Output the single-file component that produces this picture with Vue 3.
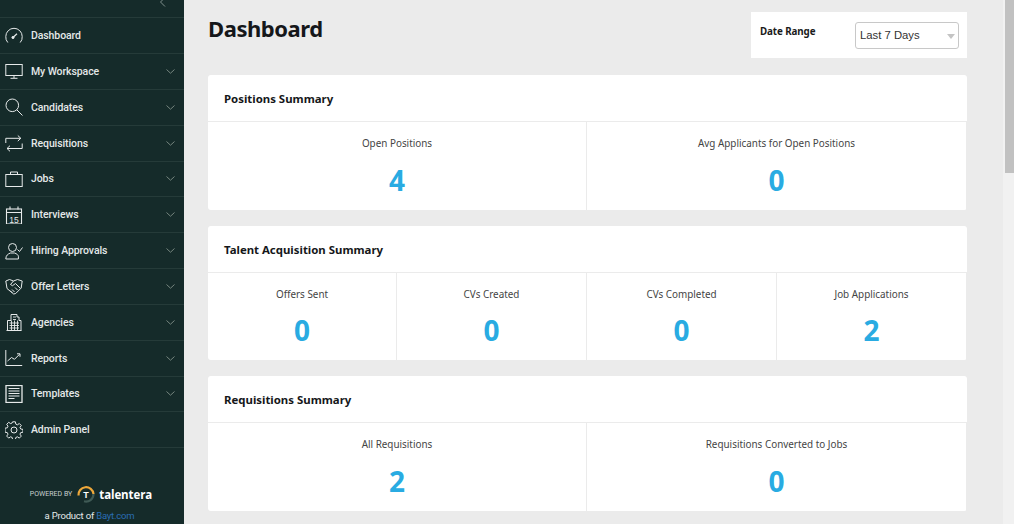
<script setup>
const navItems = [
  { label: 'Dashboard', icon: 'gauge', arrow: false },
  { label: 'My Workspace', icon: 'monitor', arrow: true },
  { label: 'Candidates', icon: 'search', arrow: true },
  { label: 'Requisitions', icon: 'repeat', arrow: true },
  { label: 'Jobs', icon: 'case', arrow: true },
  { label: 'Interviews', icon: 'calendar', arrow: true },
  { label: 'Hiring Approvals', icon: 'approve', arrow: true },
  { label: 'Offer Letters', icon: 'hands', arrow: true },
  { label: 'Agencies', icon: 'building', arrow: true },
  { label: 'Reports', icon: 'chart', arrow: true },
  { label: 'Templates', icon: 'doc', arrow: true },
  { label: 'Admin Panel', icon: 'gear', arrow: false }
]
const cards = [
  { title: 'Positions Summary', stats: [['Open Positions', 4], ['Avg Applicants for Open Positions', 0]] },
  { title: 'Talent Acquisition Summary', stats: [['Offers Sent', 0], ['CVs Created', 0], ['CVs Completed', 0], ['Job Applications', 2]] },
  { title: 'Requisitions Summary', stats: [['All Requisitions', 2], ['Requisitions Converted to Jobs', 0]] }
]
</script>

<template>
  <div class="page">
    <aside class="sidebar">
      <div class="collapse">
        <svg width="8" height="12" viewBox="0 0 8 12"><path d="M6 0.5 1.500 5 6 9.500" fill="none" stroke="#7f8f8c" stroke-width="1"/></svg>
      </div>
      <nav>
        <a v-for="item in navItems" :key="item.label" class="nav-item">
          <svg class="nav-icon" width="18" height="18" viewBox="0 0 18 18" fill="none" stroke="#e6eaea" stroke-width="1">
            <template v-if="item.icon === 'gauge'">
              <path d="M2.800 15.500A8 8 0 0 1 .8 9.500 8.200 8.200 0 0 1 17.200 9.500 8 8 0 0 1 15.200 15.500"/><path d="M8.200 10.200 12 6.800" stroke-width="1.200"/><circle cx="8" cy="10.500" r="1.100" fill="#e6eaea"/>
            </template>
            <template v-else-if="item.icon === 'monitor'">
              <rect x=".8" y="2.500" width="16.400" height="11"/><path d="M9 13.500v2.500M5.500 16.300h7"/>
            </template>
            <template v-else-if="item.icon === 'search'">
              <circle cx="7.300" cy="7.300" r="6.300"/><path d="M11.800 11.800l5.700 5.700"/>
            </template>
            <template v-else-if="item.icon === 'repeat'">
              <path d="M.8 9V4.300h15M12.800 1.500l3 2.800-3 2.800M17.200 9.500v5H2M5 11.700l-3 2.800 3 2.800"/>
            </template>
            <template v-else-if="item.icon === 'case'">
              <rect x=".8" y="4.500" width="16.400" height="12"/><path d="M5.500 4.500V2h7v2.500"/>
            </template>
            <template v-else-if="item.icon === 'calendar'">
              <rect x="1.500" y="3" width="15" height="15" stroke-width="1.100"/><path d="M1.500 6.500h15M5 .5v3M13 .5v3" stroke-width="1.100"/><text x="9" y="16.500" text-anchor="middle" class="cal-text">15</text>
            </template>
            <template v-else-if="item.icon === 'approve'">
              <circle cx="7.500" cy="5.500" r="4"/><path d="M.8 17c0-3.500 2.200-5.200 4.700-6h4c2.400.8 3.700 2 3.900 3.300V17zM12.500 7.500l2 2 3-4"/>
            </template>
            <template v-else-if="item.icon === 'hands'">
              <path d="M.8 4 4.500 2.500 8.500 4l4-1.500L17.200 4l-1 7-5.500 5.500-2 .5-3.500-2.800L2 11.500z"/><path d="M8.500 4 5.500 7.500l2 1.200 3-2.200 4.500 4.500M7 12.500l2.500 2.500M5 13.500l2.200 2.200M10 10.500l2.500 2.500"/>
            </template>
            <template v-else-if="item.icon === 'building'">
              <path d="M2.500 17.500V7.500h3.500V1.500h6V4h2v3.500h2V17.500zM1.500 17.500h15"/><path d="M4.500 10h9.500M4.500 12.500h9.500M4.500 15h9.500M8 4h3M8 6.500h3M6.500 7.500v10M9.500 7.500v10M12.500 7.500v10" stroke-width=".9"/>
            </template>
            <template v-else-if="item.icon === 'chart'">
              <path d="M.8 1v15.500h16.400"/><path d="M2.500 12l4-3.500 3 1.800 5-5M12 4.800h3v3"/>
            </template>
            <template v-else-if="item.icon === 'doc'">
              <rect x="1" y=".5" width="16" height="17" stroke-width="1.300"/><path d="M3.500 3.500h11M3.500 6h11M3.500 8.500h11M3.500 11h11M3.500 13.500h6"/>
            </template>
            <template v-else>
              <circle cx="9" cy="9" r="3"/><path d="M7.600.8h2.800l.4 2.300 1.600.7 1.900-1.300 2 2-1.300 1.900.7 1.600 2.300.4v2.800l-2.300.4-.7 1.600 1.300 1.900-2 2-1.900-1.300-1.600.7-.4 2.300H7.600l-.4-2.300-1.600-.7-1.900 1.300-2-2 1.300-1.900-.7-1.600-2.300-.4V7.200l2.300-.4.7-1.600-1.300-1.900 2-2 1.900 1.300 1.600-.7z"/>
            </template>
          </svg>
          <span class="nav-label">{{ item.label }}</span>
          <svg v-if="item.arrow" class="nav-arrow" width="9" height="5" viewBox="0 0 9 5"><path d="M.5.5 4.500 4.200 8.500.5" fill="none" stroke="#75857f" stroke-width="1"/></svg>
        </a>
      </nav>
      <footer class="side-footer">
        <div class="powered">
          <span class="powered-by">POWERED BY</span>
          <svg class="logo" width="18" height="18" viewBox="0 0 18 18" fill="none">
            <path d="M1.500 10.500A7.500 7.500 0 0 1 16.500 9" stroke="#eea83a" stroke-width="2.200"/>
            <path d="M16.500 9A7.500 7.500 0 0 1 7 16.300" stroke="#3f5a55" stroke-width="2.200"/>
            <text x="9" y="12.500" text-anchor="middle" class="logo-t">T</text>
          </svg>
          <span class="brand">talentera</span>
        </div>
        <div class="product">a Product of <span class="bayt">Bayt.com</span></div>
      </footer>
    </aside>
    <main class="main">
      <header class="top">
        <h1>Dashboard</h1>
        <div class="range">
          <label>Date Range</label>
          <div class="select">
            <span>Last 7 Days</span>
            <i class="caret"></i>
          </div>
        </div>
      </header>
      <section v-for="card in cards" :key="card.title" class="card">
        <h2>{{ card.title }}</h2>
        <div class="stats">
          <div v-for="s in card.stats" :key="s[0]" class="stat">
            <div class="stat-label">{{ s[0] }}</div>
            <div class="stat-value">{{ s[1] }}</div>
          </div>
        </div>
      </section>
    </main>
    <div class="scrollbar"><div class="thumb"></div></div>
  </div>
</template>

<style>
html, body { margin: 0; overflow: hidden; height: 524px; background: #ebebeb; }
</style>

<style scoped>
.page { display: flex; width: 1014px; height: 524px; overflow: hidden; background: #ebebeb; }
.sidebar { width: 184px; flex: none; background: #152b2a; display: flex; flex-direction: column; font-family: Roboto, sans-serif; }
.collapse { height: 18.250px; flex: none; overflow: hidden; box-sizing: border-box; padding-left: 159px; border-bottom: 1px solid #253b39; }
.collapse svg { display: block; margin-top: -3px; }
.nav-item { height: 35.830px; box-sizing: border-box; display: flex; align-items: center; padding: 0 9px 0 5px; border-bottom: 1px solid #253b39; color: #e4e8e8; }
.nav-icon { flex: none; margin-right: 8px; }
.nav-label { flex: 1; font-size: 10.500px; font-weight: 500; letter-spacing: -.1px; }
.nav-arrow { flex: none; }
.cal-text { font: 8.500px "Liberation Sans", sans-serif; fill: #e6eaea; stroke: none; }
.side-footer { margin-top: auto; padding-bottom: 2px; text-align: center; color: #e6eaea; }
.powered { display: flex; align-items: center; justify-content: center; height: 20px; padding-right: 2px; }
.powered-by { font-size: 7px; color: #c8d0cf; margin-right: 5px; }
.logo { margin-right: 4px; }
.logo-t { font: bold 9px "Liberation Sans", sans-serif; fill: #fff; }
.brand { font: bold 11.500px "Open Sans", sans-serif; color: #fff; letter-spacing: -.1px; }
.product { font-size: 9.500px; letter-spacing: -.2px; margin-top: 6px; line-height: 12px; padding-right: 5px; }
.bayt { color: #2a6db5; }
.main { width: 759px; flex: none; margin-left: 24px; font-family: "Noto Sans", sans-serif; }
.top { display: flex; justify-content: space-between; align-items: flex-start; height: 75px; }
h1 { margin: 12px 0 0; font-size: 22px; letter-spacing: -.45px; line-height: 32px; font-weight: 700; color: #15171a; }
.range { margin-top: 12px; width: 216px; height: 46px; box-sizing: border-box; background: #fff; display: flex; justify-content: space-between; padding: 10px 8px 0 9px; }
.range label { font-size: 9.800px; letter-spacing: -.1px; font-weight: 700; color: #1a1a1a; line-height: 20px; }
.select { width: 104px; height: 27px; box-sizing: border-box; border: 1px solid #c8c8c8; border-radius: 3px; display: flex; align-items: center; justify-content: space-between; padding: 0 3px 2px 4px; font: 11.300px "Liberation Sans", sans-serif; color: #333; }
.caret { width: 0; height: 0; border: 4px solid transparent; border-top: 5px solid #c4c4c4; border-bottom: 0; margin-top: 4px; }
.card { background: #fff; border-radius: 3px; margin-bottom: 16px; height: 134.670px; display: flex; flex-direction: column; }
h2 { margin: 0; height: 47px; flex: none; box-sizing: border-box; padding: 0 16px; line-height: 47px; font-size: 11.400px; font-weight: 700; color: #15171a; border-bottom: 1px solid #ebebeb; }
.stats { flex: 1; display: flex; margin-left: -1px; }
.stat { flex: 1 1 0; box-sizing: border-box; text-align: center; border-right: 1px solid #ebebeb; }
.stat:first-child > div { padding-left: 1px; }
.stat-label { font-size: 9.900px; line-height: 14px; margin-top: 14px; color: #444; }
.stat-value { font-size: 28px; line-height: 36px; font-weight: 700; color: #29abe2; margin-top: 11.500px; }
.scrollbar { margin-left: auto; flex: none; width: 11px; height: 524px; background: #f1f1f1; }
.thumb { margin-left: 2px; height: 173px; background: #c1c1c1; }
</style>
